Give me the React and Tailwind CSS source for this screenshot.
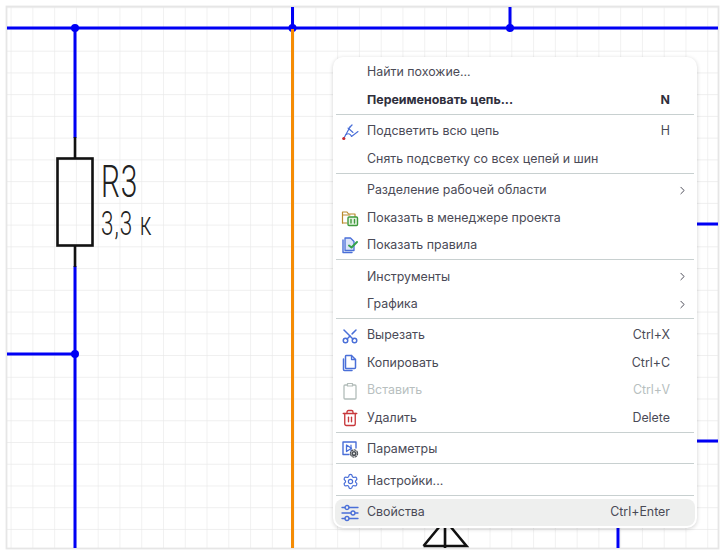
import { ChevronRight, Scissors, Settings, Trash2 } from 'lucide-react';

const BLUE = '#0000f5';

function Schematic() {
    return (
        <svg className="absolute inset-0" width="726" height="556" viewBox="0 0 726 556">
            <defs>
                <pattern id="grid" x="10.6" y="7.2" width="21.77" height="21.74" patternUnits="userSpaceOnUse">
                    <path d="M0 0V21.74M0 0H21.77" stroke="#eaeaea" strokeWidth="1.300" fill="none" />
                </pattern>
            </defs>
            <rect x="7" y="7" width="711" height="541" fill="url(#grid)" />
            <rect x="6.5" y="6.5" width="712" height="542" fill="none" stroke="#e6e6e6" strokeWidth="1.8" />

            <g stroke={BLUE} strokeWidth="3" fill="none">
                <path d="M7 28H718" />
                <path d="M75 28V138M75 266V548" />
                <path d="M7 354H75" />
                <path d="M292.500 7V28" />
                <path d="M510 7V28" />
                <path d="M697 224H718M697 441H718" />
                <path d="M618 526V548" />
            </g>
            <circle cx="75" cy="28" r="4" fill={BLUE} />
            <circle cx="75" cy="354" r="4" fill={BLUE} />
            <circle cx="292.500" cy="28" r="4" fill={BLUE} />
            <circle cx="510" cy="28" r="4" fill={BLUE} />
            <path d="M292.500 29V548" stroke="#f58c05" strokeWidth="3" />

            <g stroke="#111" strokeWidth="2.600" fill="none">
                <path d="M75 137V158M75 246V267" />
                <rect x="57.500" y="158.500" width="35" height="87" />
                <path d="M423.500 546H466.500L450 526M440 526L423.500 546M445 526V548" />
            </g>

            <text fontFamily="Roboto, sans-serif" fontWeight="300" fontSize="44" fill="#222" letterSpacing="1" transform="translate(101 197) scale(0.68 1)">R3</text>
            <text fontFamily="Roboto, sans-serif" fontWeight="300" fontSize="33" fill="#222" letterSpacing="1.5" transform="translate(101 235) scale(0.68 1)">3,3 к</text>
        </svg>
    );
}

const IconBox = ({ children }) => (
    <svg width="18" height="18" viewBox="0 0 18 18" fill="none" strokeLinecap="round" strokeLinejoin="round">{children}</svg>
);

const HighlightIcon = () => (
    <IconBox>
        <path d="M3 15L9 4" stroke="#4a6fd8" strokeWidth="1.200" />
        <path d="M5 11.500C7.500 10 9.500 11 10.500 13.500L17 8.500" stroke="#4a6fd8" strokeWidth="1.100" />
        <path d="M7 5L12 9.500" stroke="#4a6fd8" strokeWidth="1.100" />
        <path d="M9 4L11 2" stroke="#4a6fd8" strokeWidth="1.300" />
        <circle cx="2.800" cy="15.500" r="1.600" fill="#c8282e" />
    </IconBox>
);

const FolderIcon = () => (
    <IconBox>
        <path d="M1.500 14V3H6L7.500 5H14V8" stroke="#b98a2c" strokeWidth="1.200" />
        <path d="M1.500 6H9" stroke="#b98a2c" strokeWidth="1" />
        <path d="M1.500 14H6" stroke="#b98a2c" strokeWidth="1.200" />
        <rect x="7" y="8" width="9.500" height="8.500" rx="1" fill="#e4f2e2" stroke="#3f9a3c" strokeWidth="1.400" />
        <path d="M10 10.500V14M13.500 10.500V14" stroke="#3f9a3c" strokeWidth="1.400" />
    </IconBox>
);

const RulesIcon = () => (
    <IconBox>
        <path d="M2 4V16.500H11" stroke="#4a6fd8" strokeWidth="1.400" />
        <path d="M4 2H9.500L13 5.500V14.500H4Z" fill="#dbe4fa" stroke="#4a6fd8" strokeWidth="1.300" />
        <path d="M8 9.500L10.500 11.500L16 6" stroke="#35a24c" strokeWidth="2" />
    </IconBox>
);

const CopyIcon = () => (
    <IconBox>
        <path d="M2.500 5V15.500C2.500 16.300 3 16.500 3.500 16.500H11" stroke="#4a6fd8" strokeWidth="1.500" />
        <path d="M5 1.500H10.500L14.500 5.500V13.500C14.500 14 14 14.500 13.500 14.500H5C4.500 14.500 4.500 14 4.500 13.500V2.500C4.500 2 4.500 1.500 5 1.500Z" fill="#fff" stroke="#4a6fd8" strokeWidth="1.500" />
        <path d="M10.500 1.500V5.500H14.500" stroke="#4a6fd8" strokeWidth="1.300" />
    </IconBox>
);

const PasteIcon = () => (
    <IconBox>
        <rect x="3" y="3" width="12" height="14" rx="1" stroke="#b3bdba" strokeWidth="1.300" />
        <rect x="6.500" y="1.500" width="5" height="2.500" fill="#fff" stroke="#b3bdba" strokeWidth="1.200" />
    </IconBox>
);

const ParamsIcon = () => (
    <IconBox>
        <path d="M8 14.500H2V2H15V8" stroke="#4a6fd8" strokeWidth="1.400" />
        <path d="M5.500 5V11.500L10.500 8.200Z" stroke="#4a6fd8" strokeWidth="1.300" />
        <path d="M10 5V11" stroke="#4a6fd8" strokeWidth="1.200" />
        <circle cx="13" cy="13.500" r="2.600" fill="#4a4f55" />
        <circle cx="13" cy="13.500" r="3.600" stroke="#4a4f55" strokeWidth="1.200" strokeDasharray="1.400 1.400" />
        <circle cx="13" cy="13.500" r="0.900" fill="#fff" />
    </IconBox>
);

const SlidersIcon = () => (
    <IconBox>
        <g stroke="#4a6fd8" strokeWidth="1.300">
            <path d="M1 3.500H4M8 3.500H17" />
            <circle cx="6" cy="3.500" r="2" />
            <path d="M1 9H10M14 9H17" />
            <circle cx="12" cy="9" r="2" />
            <path d="M1 14.500H4M8 14.500H17" />
            <circle cx="6" cy="14.500" r="2" />
        </g>
    </IconBox>
);

function Row({ icon, label, hint, arrow, bold, muted, active }) {
    const tone = bold ? 'font-bold text-[#2f2f3c]' : muted ? 'text-[#b8bfbf]' : 'text-[#4a4a56]';
    return (
        <div className={`flex h-[27.4px] items-center rounded-lg px-[6px] ${active ? 'bg-[#eeefee]' : ''}`}>
            <span className="flex w-[18px] shrink-0 items-center justify-center">{icon}</span>
            <span className={`ml-[8px] grow text-[12.4px] ${tone}`}>{label}</span>
            {hint && <span className={`mr-[19px] text-[12.4px] ${tone}`}>{hint}</span>}
            {arrow && <ChevronRight size={13} strokeWidth={1.8} className="text-[#4a4a56]" />}
        </div>
    );
}

const Sep = () => <div className="mx-[1px] mb-[3.150px] h-px shrink-0 bg-[#c8d0d0]" />;

function ContextMenu() {
    const blue = 'text-[#4a6fd8]';
    return (
        <div className="absolute left-[333px] top-[56.500px] w-[364px] rounded-[10px] bg-white p-[2px] pt-[2.500px] shadow-[0_1px_4px_rgba(0,0,0,0.18)]">
            <Row label="Найти похожие..." />
            <Row label="Переименовать цепь..." hint="N" bold />
            <Sep />
            <Row icon={<HighlightIcon />} label="Подсветить всю цепь" hint="H" />
            <Row label="Снять подсветку со всех цепей и шин" />
            <Sep />
            <Row label="Разделение рабочей области" arrow />
            <Row icon={<FolderIcon />} label="Показать в менеджере проекта" />
            <Row icon={<RulesIcon />} label="Показать правила" />
            <Sep />
            <Row label="Инструменты" arrow />
            <Row label="Графика" arrow />
            <Sep />
            <Row icon={<Scissors size={18} strokeWidth={2} className={`-rotate-90 ${blue}`} />} label="Вырезать" hint="Ctrl+X" />
            <Row icon={<CopyIcon />} label="Копировать" hint="Ctrl+C" />
            <Row icon={<PasteIcon />} label="Вставить" hint="Ctrl+V" muted />
            <Row icon={<Trash2 size={18} strokeWidth={1.8} className="text-[#c8383c]" />} label="Удалить" hint="Delete" />
            <Sep />
            <Row icon={<ParamsIcon />} label="Параметры" />
            <Sep />
            <Row icon={<Settings size={17} strokeWidth={1.7} className={blue} />} label="Настройки..." />
            <Sep />
            <Row icon={<SlidersIcon />} label="Свойства" hint="Ctrl+Enter" active />
        </div>
    );
}

export default function App() {
    return (
        <div className="relative h-[556px] w-[726px] overflow-hidden bg-white font-['Inter',sans-serif]">
            <Schematic />
            <ContextMenu />
        </div>
    );
}
